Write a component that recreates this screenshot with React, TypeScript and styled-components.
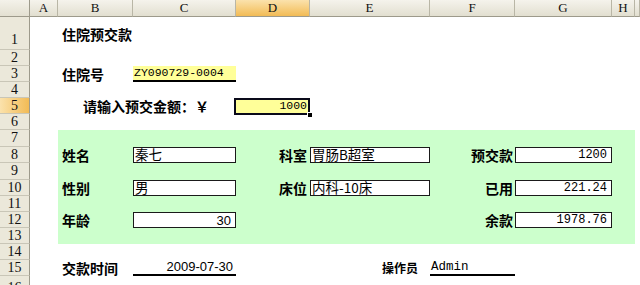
import styled, { createGlobalStyle, css } from 'styled-components';

const CJK = `"Noto Sans CJK SC", "Noto Sans", sans-serif`;
const MONO = `"Liberation Mono", "Noto Sans CJK SC", monospace`;

const GlobalStyle = createGlobalStyle`
  html, body { margin: 0; padding: 0; background: #fff; }
  body { width: 640px; height: 285px; overflow: hidden; }
`;

type Pos = { $c: number; $r: number; $span?: number };

const place = css<Pos>`
  grid-column: ${p => p.$c} / span ${p => p.$span ?? 1};
  grid-row: ${p => p.$r};
`;

const Sheet = styled.div`
  display: grid;
  grid-template-columns: 30px 28px 75px 103px 74px 120px 85px 97px 23px 1fr;
  grid-template-rows: 17px 33px 16px 16px 16px 16px 16px 17px 16px 17px 16px 16px 16px 16px 16px 16px 24px;
  width: 640px;
  height: 285px;
  overflow: hidden;
  background: #fff;
`;

const Corner = styled.div`
  grid-column: 1;
  grid-row: 1;
  background: linear-gradient(#f4f2ea, #e3e0d1);
  border-right: 1px solid #9d9a8b;
  border-bottom: 1px solid #9d9a8b;
`;

const ColHead = styled.div<Pos & { $active?: boolean }>`
  ${place};
  display: flex;
  align-items: center;
  justify-content: center;
  font: 13px "Liberation Serif", serif;
  color: #111;
  background: ${p => (p.$active ? 'linear-gradient(#fbe2ac, #f2bb55)' : 'linear-gradient(#f5f3ec, #e2dfd0)')};
  border-right: 1px solid #b9b6a6;
  border-bottom: 1px solid #9d9a8b;
  box-sizing: border-box;
`;

const RowHead = styled.div<Pos & { $active?: boolean; $tall?: boolean }>`
  ${place};
  display: flex;
  align-items: ${p => (p.$tall ? 'flex-end' : 'center')};
  justify-content: center;
  font: 14px/1 "Liberation Serif", serif;
  color: #111;
  padding-bottom: ${p => (p.$tall ? '2px' : '0')};
  background: ${p => (p.$active ? 'linear-gradient(90deg, #fbe2ac, #f2bb55)' : '#ebe8da')};
  border-right: 1px solid #9d9a8b;
  border-bottom: 1px solid #c9c6b7;
  box-sizing: border-box;
`;

const Panel = styled.div`
  grid-column: 3 / 10;
  grid-row: 8 / 15;
  background: #ccffcc;
`;

const Label = styled.div<Pos & { $align?: string; $pad?: string; $size?: number }>`
  ${place};
  display: flex;
  align-items: center;
  justify-content: ${p => p.$align ?? 'flex-start'};
  padding: ${p => p.$pad ?? '0 0 0 4px'};
  font: bold ${p => p.$size ?? 14}px/1 ${CJK};
  color: #000;
  white-space: nowrap;
`;

const Field = styled.div<Pos & { $align?: string; $mono?: boolean; $sans?: boolean }>`
  ${place};
  display: flex;
  align-items: center;
  justify-content: ${p => p.$align ?? 'flex-start'};
  box-sizing: border-box;
  border: 1px solid #1a1a1a;
  background: #fff;
  padding: 0 4px 0 1px;
  font: ${p => (p.$mono ? `12px/1 ${MONO}` : p.$sans ? `13px/1 "Liberation Sans", sans-serif` : `13.5px/1 ${CJK}`)};
  color: #000;
  white-space: nowrap;
`;

const CodeCell = styled.div<Pos>`
  ${place};
  display: flex;
  align-items: center;
  box-sizing: border-box;
  background: #ffff99;
  border-bottom: 2px solid #000;
  padding-left: 1px;
  font: 11.5px/1 ${MONO};
  color: #000;
`;

const Amount = styled.div<Pos>`
  ${place};
  position: relative;
  display: flex;
  align-items: center;
  justify-content: flex-end;
  background: #ffff99;
  padding-right: 3px;
  font: 11.5px/1 ${MONO};
  color: #000;
`;

const SelectFrame = styled.span`
  position: absolute;
  top: 0;
  left: -2px;
  right: 0;
  bottom: -1px;
  border: 2px solid #0a0a1a;
  pointer-events: none;
`;

const FillHandle = styled.span`
  position: absolute;
  right: -3px;
  bottom: -4px;
  width: 4px;
  height: 4px;
  background: #000;
  border: 1px solid #fff;
`;

const Underlined = styled.div<Pos & { $align?: string; $mono?: boolean }>`
  ${place};
  display: flex;
  align-items: flex-end;
  justify-content: ${p => p.$align ?? 'flex-start'};
  box-sizing: border-box;
  border-bottom: 2px solid #000;
  padding: 0 3px 1px 1px;
  font: ${p => (p.$mono ? `12.5px/1 ${MONO}` : `13px/1 "Liberation Sans", sans-serif`)};
  color: #000;
`;

const columns = ['A', 'B', 'C', 'D', 'E', 'F', 'G', 'H', ''];
const rows = Array.from({ length: 16 }, (_, i) => i + 1);

export default function App() {
  return (
    <>
      <GlobalStyle />
      <Sheet>
        <Corner />
        {columns.map((c, i) => (
          <ColHead key={'c' + i} $c={i + 2} $r={1} $active={c === 'D'}>
            {c}
          </ColHead>
        ))}
        {rows.map(r => (
          <RowHead key={'r' + r} $c={1} $r={r + 1} $active={r === 5} $tall={r === 1}>
            {r}
          </RowHead>
        ))}

        <Panel />

        <Label $c={3} $r={2} $span={2}>住院预交款</Label>

        <Label $c={3} $r={4}>住院号</Label>
        <CodeCell $c={4} $r={4}>ZY090729-0004</CodeCell>

        <Label $c={3} $r={6} $span={2} $pad="0 0 0 25px">请输入预交金额：￥</Label>
        <Amount $c={5} $r={6}>
          1000
          <SelectFrame />
          <FillHandle />
        </Amount>

        <Label $c={3} $r={9}>姓名</Label>
        <Field $c={4} $r={9}>秦七</Field>
        <Label $c={5} $r={9} $align="flex-end" $pad="0 3px 0 0">科室</Label>
        <Field $c={6} $r={9}>胃肠B超室</Field>
        <Label $c={7} $r={9} $align="flex-end" $pad="0 2px 0 0">预交款</Label>
        <Field $c={8} $r={9} $align="flex-end" $mono>1200</Field>

        <Label $c={3} $r={11}>性别</Label>
        <Field $c={4} $r={11}>男</Field>
        <Label $c={5} $r={11} $align="flex-end" $pad="0 3px 0 0">床位</Label>
        <Field $c={6} $r={11}>内科-10床</Field>
        <Label $c={7} $r={11} $align="flex-end" $pad="0 2px 0 0">已用</Label>
        <Field $c={8} $r={11} $align="flex-end" $mono>221.24</Field>

        <Label $c={3} $r={13}>年龄</Label>
        <Field $c={4} $r={13} $align="flex-end" $sans>30</Field>
        <Label $c={7} $r={13} $align="flex-end" $pad="0 2px 0 0">余款</Label>
        <Field $c={8} $r={13} $align="flex-end" $mono>1978.76</Field>

        <Label $c={3} $r={16}>交款时间</Label>
        <Underlined $c={4} $r={16} $align="flex-end">2009-07-30</Underlined>
        <Label $c={6} $r={16} $align="flex-end" $pad="0 12px 0 0" $size={12}>操作员</Label>
        <Underlined $c={7} $r={16} $mono>Admin</Underlined>
      </Sheet>
    </>
  );
}
